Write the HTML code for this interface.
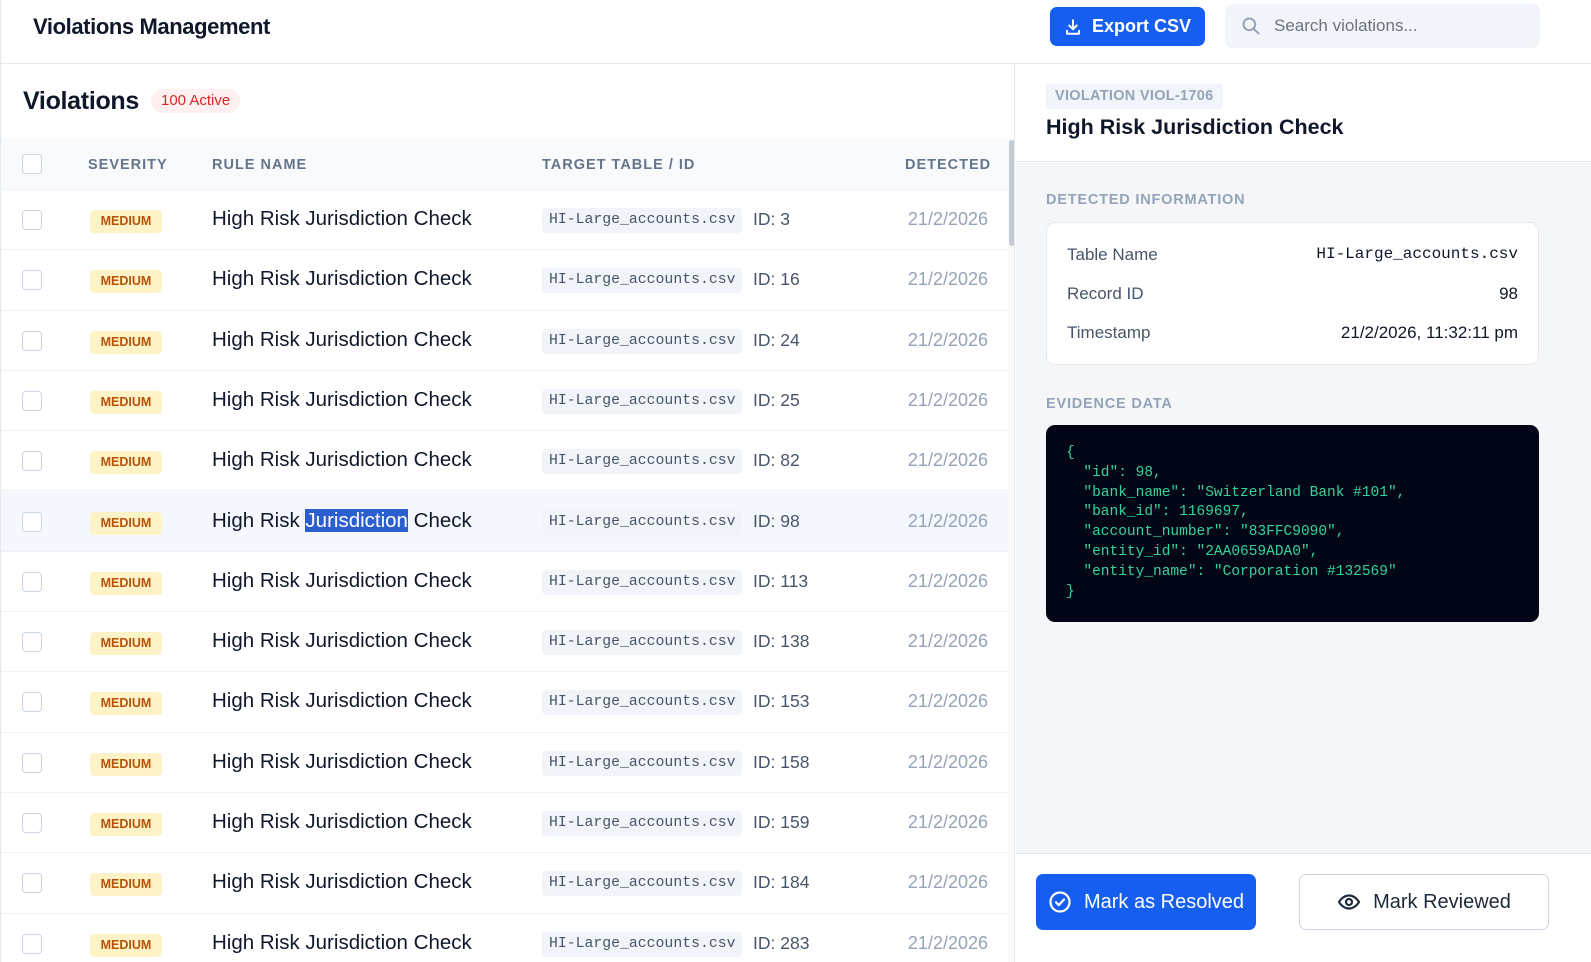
<!DOCTYPE html>
<html><head><meta charset="utf-8"><style>
*{box-sizing:border-box;margin:0;padding:0}
body{width:1591px;height:962px;overflow:hidden;font-family:"Liberation Sans",sans-serif;background:#fff;color:#0f172a;position:relative}
.hdr{position:absolute;left:0;top:0;width:1591px;height:64px;border-bottom:1px solid #e2e8f0;border-left:1px solid #e2e8f0}
.hdr h1{position:absolute;left:32px;top:14px;font-size:22px;font-weight:700;letter-spacing:-0.4px}
.exp{position:absolute;left:1049px;top:7px;width:155px;height:39px;background:#155eef;border-radius:7px;color:#fff;font-size:18px;font-weight:700;display:flex;align-items:center;justify-content:center;gap:10px}
.search{position:absolute;left:1224px;top:4px;width:315px;height:44px;background:#f1f4f8;border-radius:8px;color:#6b7280;font-size:17px;padding-left:49px;line-height:44px}
.search svg{position:absolute;left:16px;top:12px}
.left{position:absolute;left:0;top:64px;width:1015px;height:898px;border-right:1px solid #e2e8f0;border-left:1px solid #e2e8f0;overflow:hidden}
.left h2{position:absolute;left:22px;top:23px;font-size:25px;font-weight:700;letter-spacing:-0.3px}
.pill{position:absolute;left:150px;top:25px;height:24px;padding:0 10px;background:#fef0f0;color:#dc2626;border-radius:12px;font-size:15px;line-height:24px}
.th{position:absolute;left:0;top:74px;width:1007px;height:52px;background:#f8fafc;border-bottom:1px solid #eef1f5;font-size:14.5px;font-weight:700;color:#64748b;letter-spacing:1px}
.th span{position:absolute;top:19px}
.cb{position:absolute;left:21px;width:20px;height:20px;border:1.5px solid #cbd5e1;border-radius:4px;background:#fff}
.row{position:absolute;left:0;width:1007px;height:60.3px;border-bottom:1px solid #eef1f5}
.row.sel{background:#f4f7fd}
.sev{position:absolute;left:89px;top:20px;width:72px;height:23px;background:#fef3c7;color:#b45309;font-size:12.5px;font-weight:700;border-radius:4px;text-align:center;line-height:23px}
.rn{position:absolute;left:211px;top:17px;font-size:20.5px;color:#0f172a}
.rn b{font-weight:400;background:#2b5fd0;color:#fff}
.tt{position:absolute;left:541px;top:18px;height:25px;padding:0 7px;background:#f1f4f8;border-radius:4px;font-family:"Liberation Mono",monospace;font-size:14.8px;color:#475569;line-height:25px}
.id{position:absolute;left:752px;top:19px;font-size:17.5px;color:#475569}
.dt{position:absolute;right:20px;top:19px;font-size:18px;color:#94a3b8}
.sb{position:absolute;left:1007px;top:74px;width:8px;height:824px;background:#fafafa}
.sb i{position:absolute;left:1px;top:2px;width:6px;height:106px;background:#c4cbd5;border-radius:3px}
.right{position:absolute;left:1016px;top:64px;width:575px;height:898px;background:#f5f6f8}
.rtop{position:absolute;left:0;top:0;width:575px;height:98px;background:#fff;border-bottom:1px solid #e2e8f0}
.vtag{position:absolute;left:30px;top:20px;height:25px;padding:0 9px;background:#f1f4f8;border-radius:4px;color:#94a3b8;font-size:14.5px;font-weight:700;line-height:25px;letter-spacing:.3px}
.rtop h3{position:absolute;left:30px;top:51px;font-size:21.5px;font-weight:700}
.lbl{position:absolute;left:30px;font-size:14.5px;font-weight:700;color:#94a3b8;letter-spacing:.8px}
.card{position:absolute;left:30px;top:158px;width:493px;height:143px;background:#fff;border:1px solid #e5e9ef;border-radius:9px;font-size:17px}
.card div{position:absolute;left:20px;right:20px;display:flex;justify-content:space-between;color:#475569}
.card div span:last-child{color:#0f172a}
.mono{font-family:"Liberation Mono",monospace;font-size:16px}
.code{position:absolute;left:30px;top:361px;width:493px;height:197px;background:#020617;border-radius:9px;color:#34d399;font-family:"Liberation Mono",monospace;font-size:14.5px;line-height:19.8px;padding:19px 20px;white-space:pre}
.foot{position:absolute;left:0;top:789px;width:575px;height:109px;background:#fff;border-top:1px solid #e2e8f0}
.b1{position:absolute;left:20px;top:20px;width:220px;height:56px;background:#155eef;border-radius:7px;color:#fff;font-size:20px;display:flex;align-items:center;justify-content:center;gap:12px}
.b2{position:absolute;left:283px;top:20px;width:250px;height:56px;border:1px solid #cbd5e1;border-radius:7px;color:#1e293b;font-size:20px;display:flex;align-items:center;justify-content:center;gap:12px;background:#fff}
</style></head><body>
<div class="hdr"><h1>Violations Management</h1>
<div class="exp"><svg width="18" height="18" viewBox="0 0 24 24" fill="none" stroke="#fff" stroke-width="2.6" stroke-linecap="round" stroke-linejoin="round"><path d="M12 3v12M7 10l5 5 5-5M4 17v4h16v-4"/></svg>Export CSV</div>
<div class="search"><svg width="20" height="20" viewBox="0 0 24 24" fill="none" stroke="#94a3b8" stroke-width="2.4" stroke-linecap="round"><circle cx="10" cy="10" r="7"/><path d="M15.5 15.5L21 21"/></svg>Search violations...</div>
</div>
<div class="left">
<h2>Violations</h2><div class="pill">100 Active</div>
<div class="th"><div class="cb" style="top:16px"></div><span style="left:87px">SEVERITY</span><span style="left:211px">RULE NAME</span><span style="left:541px">TARGET TABLE / ID</span><span style="left:904px">DETECTED</span></div>
<div id="rows"></div>
<div class="sb"><i></i></div>
</div>
<div class="right">
<div class="rtop"><div class="vtag">VIOLATION VIOL-1706</div><h3>High Risk Jurisdiction Check</h3></div>
<div class="lbl" style="top:128px">DETECTED INFORMATION</div>
<div class="card">
<div style="top:22px"><span>Table Name</span><span class="mono">HI-Large_accounts.csv</span></div>
<div style="top:61px"><span>Record ID</span><span>98</span></div>
<div style="top:100px"><span>Timestamp</span><span>21/2/2026, 11:32:11 pm</span></div>
</div>
<div class="lbl" style="top:332px">EVIDENCE DATA</div>
<div class="code">{
  "id": 98,
  "bank_name": "Switzerland Bank #101",
  "bank_id": 1169697,
  "account_number": "83FFC9090",
  "entity_id": "2AA0659ADA0",
  "entity_name": "Corporation #132569"
}</div>
<div class="foot">
<div class="b1"><svg width="24" height="24" viewBox="0 0 24 24" fill="none" stroke="#fff" stroke-width="2.2" stroke-linecap="round" stroke-linejoin="round"><circle cx="12" cy="12" r="9.5"/><path d="M8 12.3l2.8 2.8L16 9.5"/></svg>Mark as Resolved</div>
<div class="b2"><svg width="24" height="24" viewBox="0 0 24 24" fill="none" stroke="#1e293b" stroke-width="2.2"><path d="M2 12s3.6-6.5 10-6.5S22 12 22 12s-3.6 6.5-10 6.5S2 12 2 12z"/><circle cx="12" cy="12" r="3"/></svg>Mark Reviewed</div>
</div>
</div>
<script>
var ids=[3,16,24,25,82,98,113,138,153,158,159,184,283],h='';
ids.forEach(function(id,i){var t=126+i*60.3;
h+='<div class="row'+(id==98?' sel':'')+'" style="top:'+t+'px"><div class="cb" style="top:20px"></div><div class="sev">MEDIUM</div><div class="rn">'+(id==98?'High Risk <b>Jurisdiction</b> Check':'High Risk Jurisdiction Check')+'</div><div class="tt">HI-Large_accounts.csv</div><div class="id">ID: '+id+'</div><div class="dt">21/2/2026</div></div>';});
document.getElementById('rows').innerHTML=h;
</script>
</body></html>
